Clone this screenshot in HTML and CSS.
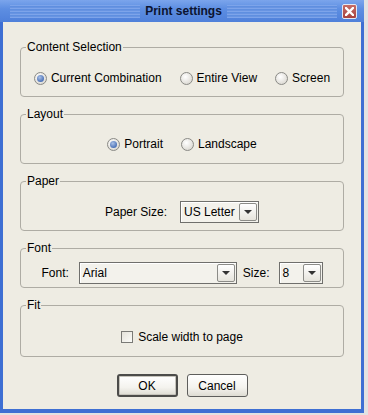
FILE: index.html
```html
<!DOCTYPE html>
<html lang="en">
<head>
    <meta charset="UTF-8">
    <title>Print settings</title>
    <link rel="stylesheet" href="styles.css">
</head>
<body>
    <div class="window">
        <div class="titlebar">
            <span class="stripes"></span>
            <span class="title">Print settings</span>
            <span class="title-right">
                <span class="stripes"></span>
                <span class="close">
                    <svg width="9" height="9" viewBox="0 0 9 9"><path d="M1 1L8 8M8 1L1 8" stroke="#fff" stroke-width="2.4" stroke-linecap="square"/></svg>
                </span>
            </span>
        </div>

        <div class="panel">
            <fieldset class="group">
                <legend>Content Selection</legend>
                <div class="row row-a">
                    <span class="option"><span class="radio checked"></span>Current Combination</span>
                    <span class="option"><span class="radio"></span>Entire View</span>
                    <span class="option"><span class="radio"></span>Screen</span>
                </div>
            </fieldset>

            <fieldset class="group">
                <legend>Layout</legend>
                <div class="row row-b">
                    <span class="option"><span class="radio checked"></span>Portrait</span>
                    <span class="option"><span class="radio"></span>Landscape</span>
                </div>
            </fieldset>

            <fieldset class="group">
                <legend>Paper</legend>
                <div class="row row-a paper-row">
                    <span>Paper Size:</span>
                    <span class="combo combo-paper">
                        <span class="combo-text">US Letter</span>
                        <span class="combo-btn"></span>
                    </span>
                </div>
            </fieldset>

            <fieldset class="group">
                <legend>Font</legend>
                <div class="row row-c font-row">
                    <span>Font:</span>
                    <span class="combo combo-font">
                        <span class="combo-text">Arial</span>
                        <span class="combo-btn"></span>
                    </span>
                    <span class="size-label">Size:</span>
                    <span class="combo combo-size">
                        <span class="combo-text">8</span>
                        <span class="combo-btn"></span>
                    </span>
                </div>
            </fieldset>

            <fieldset class="group group-fit">
                <legend>Fit</legend>
                <div class="row row-d">
                    <span class="option"><span class="checkbox"></span>Scale width to page</span>
                </div>
            </fieldset>

            <div class="buttons">
                <button class="btn btn-default" type="button">OK</button>
                <button class="btn" type="button">Cancel</button>
            </div>
        </div>
    </div>
</body>
</html>
```

FILE: styles.css
```css
body {
    margin: 0;
    padding: 0;
    background-color: #e2e2e2;
    font-family: "Liberation Sans", Arial, sans-serif;
    font-size: 12px;
    color: #000;
}

.window {
    width: 364px;
    height: 413px;
    box-sizing: border-box;
    border: 3px solid #3e6fd3;
    border-top: 0;
    border-bottom-width: 4px;
    background-color: #eeece3;
    display: flex;
    flex-direction: column;
}

/* title bar */
.titlebar {
    height: 22px;
    margin: 0 -3px;
    padding: 0 7px 0 10px;
    display: grid;
    grid-template-columns: 1fr auto 1fr;
    align-items: center;
    background: linear-gradient(#7ba5ec, #5d8ee2 40%, #4f80da);
    flex-shrink: 0;
}
.stripes {
    display: block;
    height: 13px;
    background: repeating-linear-gradient(to bottom, #7da4ea 0 1px, #5f8fe0 1px 2px, #6894e2 2px 3px);
}
.title-right .stripes {
    flex: 1;
}
.title {
    margin: 0 5px;
    font-weight: bold;
    font-size: 12px;
    color: #0c1430;
}
.title-right {
    display: flex;
    align-items: center;
}
.close {
    width: 15px;
    height: 15px;
    margin-left: 5px;
    box-sizing: border-box;
    border: 1px solid #e2e8f4;
    border-radius: 2px;
    background: linear-gradient(#c66c66, #a8433f);
    display: flex;
    align-items: center;
    justify-content: center;
}

/* content */
.panel {
    flex: 1;
    padding: 18px 17px 0 17px;
}
.group {
    margin: 0 0 10px 0;
    padding: 0;
    border: 1px solid #aeaca4;
    border-radius: 4px;
}
.group-fit {
    margin-bottom: 0;
}
.group legend {
    margin-left: 5px;
    padding: 0 1px;
    line-height: 14px;
    font-size: 12px;
}
.row {
    height: 22px;
    display: flex;
    align-items: center;
    justify-content: center;
    gap: 18px;
}
.row-a { padding: 13px 0 7px 0; }
.row-b { padding: 12px 0 8px 0; }
.row-c { padding: 7px 0 3px 0; }
.row-d { padding: 14px 0 8px 0; }

.option {
    display: flex;
    align-items: center;
}
.radio {
    width: 13px;
    height: 13px;
    margin-right: 4px;
    box-sizing: border-box;
    border: 1px solid #8a8a86;
    border-radius: 50%;
    background: radial-gradient(circle at 40% 35%, #fff, #e0ded8 70%, #cfcdc6);
    position: relative;
}
.radio.checked::after {
    content: "";
    position: absolute;
    left: 2px;
    top: 2px;
    width: 7px;
    height: 7px;
    border-radius: 50%;
    background: radial-gradient(circle at 40% 35%, #a9c0e6, #4d73b8 70%);
}
.checkbox {
    width: 12px;
    height: 12px;
    margin-right: 5px;
    box-sizing: border-box;
    border: 1px solid #7a7a76;
    background: linear-gradient(135deg, #e4e2da, #fbfbf8);
}

/* combo boxes */
.paper-row { gap: 13px; }
.font-row { gap: 0; }
.font-row .combo-font { margin: 0 6px 0 10px; }
.font-row .combo-size { margin-left: 9px; }

.combo {
    height: 22px;
    box-sizing: border-box;
    border: 1px solid #6f6f6c;
    box-shadow: inset 1px 1px 0 #fff;
    background-color: #f3f2ec;
    display: flex;
    align-items: center;
    padding: 1px;
}
.combo-paper { width: 79px; }
.combo-font { width: 158px; }
.combo-size { width: 44px; }
.combo-text {
    flex: 1;
    padding-left: 2px;
    font-size: 12px;
}
.combo-btn {
    width: 18px;
    height: 18px;
    box-sizing: border-box;
    border: 1px solid #8c8c88;
    border-radius: 2px;
    background: linear-gradient(#ffffff, #e6e4dc);
    position: relative;
}
.combo-btn::after {
    content: "";
    position: absolute;
    left: 4px;
    top: 6px;
    border-left: 4px solid transparent;
    border-right: 4px solid transparent;
    border-top: 4px solid #333;
}

/* buttons */
.buttons {
    margin-top: 17px;
    display: flex;
    justify-content: center;
    gap: 9px;
}
.btn {
    width: 61px;
    height: 23px;
    padding: 0;
    box-sizing: border-box;
    font-family: "Liberation Sans", Arial, sans-serif;
    font-size: 12px;
    color: #000;
    border: 1px solid #5e5e5c;
    border-radius: 3px;
    background: linear-gradient(#ffffff, #f4f3ee 60%, #dedcd3);
}
.btn-default {
    border: 2px solid #4c4c4a;
    box-shadow: inset 0 0 0 1px #c6c4bc;
}
```
